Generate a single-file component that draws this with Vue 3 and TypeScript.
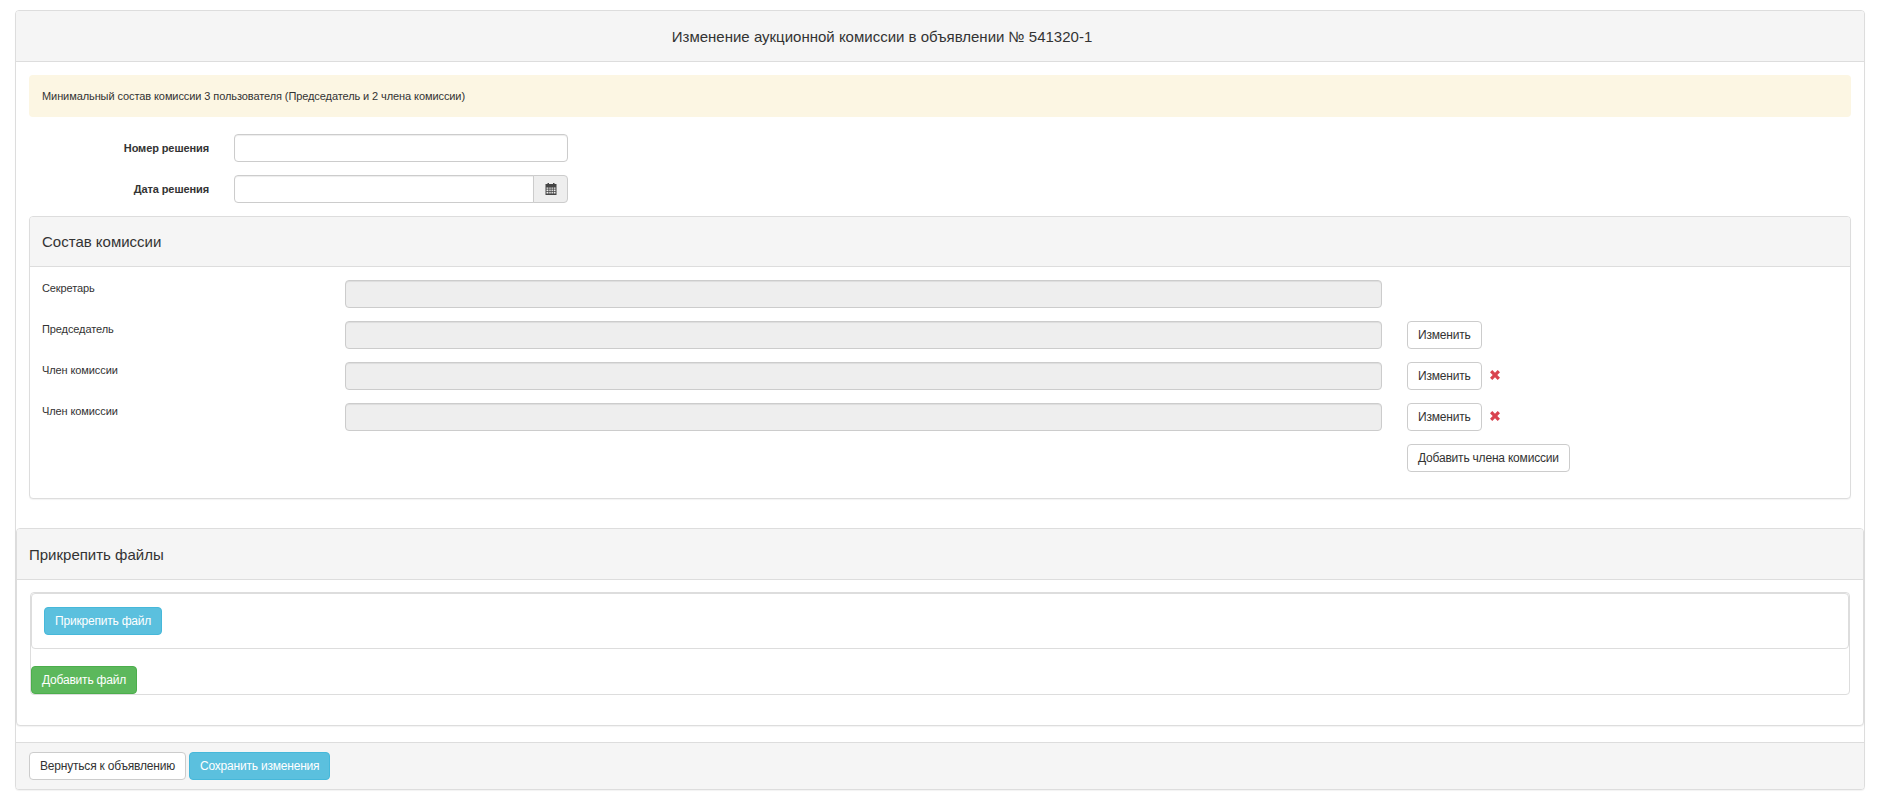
<script setup lang="ts">
interface Member {
  label: string
  canEdit: boolean
  canRemove: boolean
}

const members: Member[] = [
  { label: 'Секретарь', canEdit: false, canRemove: false },
  { label: 'Председатель', canEdit: true, canRemove: false },
  { label: 'Член комиссии', canEdit: true, canRemove: true },
  { label: 'Член комиссии', canEdit: true, canRemove: true },
]
</script>

<template>
  <div class="page">
    <div class="panel main">
      <div class="main-heading">Изменение аукционной комиссии в объявлении № 541320-1</div>

      <div class="main-body">
        <div class="alert">Минимальный состав комиссии 3 пользователя (Председатель и 2 члена комиссии)</div>

        <div class="form-row">
          <label class="form-label">Номер решения</label>
          <input class="input" type="text" />
        </div>
        <div class="form-row">
          <label class="form-label">Дата решения</label>
          <div class="input-group">
            <input class="input group-input" type="text" />
            <span class="addon">
              <svg class="calendar" viewBox="0 0 12 12" width="12" height="12" aria-hidden="true">
                <path fill="#444" fill-rule="evenodd" d="M2.500 0h1.500v1h4V0h1.500v1H11.500v11H0.500V1h2zM1.500 4.500v1.300h1.900V4.500zM4.300 4.500v1.300h1.400V4.500zM6.500 4.500v1.300h1.400V4.500zM8.700 4.500v1.300h1.800V4.500zM1.500 6.600v1.300h1.900V6.600zM4.300 6.600v1.300h1.400V6.600zM6.500 6.600v1.300h1.400V6.600zM8.700 6.600v1.300h1.800V6.600zM1.500 8.700v1.800h1.900V8.700zM4.300 8.700v1.800h1.400V8.700zM6.500 8.700v1.800h1.400V8.700zM8.700 8.700v1.800h1.800V8.700z" />
              </svg>
            </span>
          </div>
        </div>

        <div class="panel commission">
          <div class="section-heading">Состав комиссии</div>
          <div class="commission-body">
            <div v-for="(member, i) in members" :key="i" class="member-row">
              <span class="member-label">{{ member.label }}</span>
              <input class="input" type="text" disabled />
              <div class="member-actions">
                <button v-if="member.canEdit" class="btn" type="button">Изменить</button>
                <svg v-if="member.canRemove" class="remove" viewBox="0 0 10 10" width="10" height="10" aria-hidden="true">
                  <path fill="#d9434f" d="M2.300 0L5 2.700L7.700 0L10 2.300L7.300 5L10 7.700L7.700 10L5 7.300L2.300 10L0 7.700L2.700 5L0 2.300z" />
                </svg>
              </div>
            </div>
            <div class="member-row add-row">
              <div class="member-actions">
                <button class="btn" type="button">Добавить члена комиссии</button>
              </div>
            </div>
          </div>
        </div>

        <div class="panel files">
          <div class="section-heading files-heading">Прикрепить файлы</div>
          <div class="files-body">
            <div class="file-list">
              <div class="file-item">
                <button class="btn btn-info" type="button">Прикрепить файл</button>
              </div>
              <div class="file-add">
                <button class="btn btn-success" type="button">Добавить файл</button>
              </div>
            </div>
          </div>
        </div>
      </div>

      <div class="main-footer">
        <button class="btn" type="button">Вернуться к объявлению</button>
        <button class="btn btn-info" type="button">Сохранить изменения</button>
      </div>
    </div>
  </div>
</template>

<style>
body {
  background: #fff;
}
</style>

<style scoped>
.page {
  padding: 10px 15px 20px;
  font-family: "Liberation Sans", Arial, sans-serif;
  font-size: 12px;
  color: #333;
}

.panel {
  border: 1px solid #ddd;
  border-radius: 4px;
  background: #fff;
  box-shadow: 0 1px 1px rgba(0, 0, 0, 0.05);
}

.main-heading {
  height: 51px;
  box-sizing: border-box;
  display: flex;
  align-items: center;
  justify-content: center;
  padding-right: 116px;
  border-bottom: 1px solid #ddd;
  border-radius: 3px 3px 0 0;
  background: #f5f5f5;
  font-size: 15px;
}

.main-body {
  padding: 13px 13px 16px;
}

.alert {
  height: 42px;
  box-sizing: border-box;
  display: flex;
  align-items: center;
  padding: 0 13px;
  margin-bottom: 17px;
  border-radius: 4px;
  background: #fcf6e3;
  font-size: 11px;
  letter-spacing: -0.09px;
}

.form-row {
  display: grid;
  grid-template-columns: 180px 334px;
  column-gap: 25px;
  align-items: center;
  margin-bottom: 13px;
}

.form-label {
  text-align: right;
  font-size: 11px;
  font-weight: 700;
  letter-spacing: -0.1px;
}

.input {
  display: block;
  width: 100%;
  height: 28px;
  box-sizing: border-box;
  padding: 4px 10px;
  border: 1px solid #ccc;
  border-radius: 4px;
  background: #fff;
  box-shadow: inset 0 1px 1px rgba(0, 0, 0, 0.075);
  font: inherit;
  color: #555;
}

.input:disabled {
  background: #eee;
}

.input-group {
  display: flex;
}

.group-input {
  flex: 1;
  min-width: 0;
  border-radius: 4px 0 0 4px;
}

.addon {
  width: 35px;
  box-sizing: border-box;
  display: flex;
  align-items: center;
  justify-content: center;
  margin-left: -1px;
  border: 1px solid #ccc;
  border-radius: 0 4px 4px 0;
  background: #eee;
}

.calendar {
  display: block;
}

.commission {
  margin-bottom: 29px;
}

.section-heading {
  height: 50px;
  box-sizing: border-box;
  display: flex;
  align-items: center;
  padding: 0 12px;
  border-bottom: 1px solid #ddd;
  border-radius: 3px 3px 0 0;
  background: #f5f5f5;
  font-size: 15px;
}

.files-heading {
  height: 51px;
}

.commission-body {
  display: flex;
  flex-direction: column;
  gap: 13px;
  padding: 13px 12px 26px;
}

.member-row {
  display: grid;
  grid-template-columns: 303px 1037px 1fr;
  column-gap: 0;
  min-height: 28px;
}

.member-label {
  padding-top: 1px;
  font-size: 11px;
  line-height: 14px;
  letter-spacing: -0.1px;
}

.member-actions {
  display: flex;
  align-items: flex-start;
  gap: 8px;
  padding-left: 25px;
}

.add-row .member-actions {
  grid-column: 3;
}

.remove {
  display: block;
  margin-top: 8px;
}

.btn {
  height: 28px;
  box-sizing: border-box;
  padding: 0 10px;
  border: 1px solid #ccc;
  border-radius: 4px;
  background: #fff;
  font: inherit;
  letter-spacing: -0.2px;
  color: #333;
  white-space: nowrap;
}

.btn-info {
  border-color: #46b8da;
  background: #5bc0de;
  color: #fff;
}

.btn-success {
  border-color: #4cae4c;
  background: #5cb85c;
  color: #fff;
}

.files {
  margin: 0 -13px;
}

.files-body {
  padding: 12px 13px 30px;
}

.file-list {
  border: 1px solid #ddd;
  border-radius: 4px;
}

.file-item {
  height: 56px;
  box-sizing: border-box;
  padding: 13px 12px;
  border: 1px solid #ddd;
  border-radius: 4px;
  margin-bottom: 17px;
}

.file-add {
  display: flex;
}

.main-footer {
  display: flex;
  gap: 3px;
  padding: 9px 13px;
  border-top: 1px solid #ddd;
  border-radius: 0 0 3px 3px;
  background: #f5f5f5;
}
</style>
